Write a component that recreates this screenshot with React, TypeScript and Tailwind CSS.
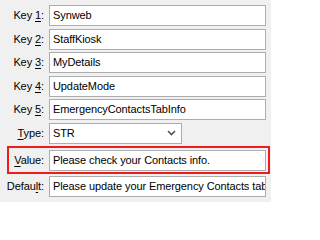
const rows = [
  { pre: "Key ", key: "1", post: ":", value: "Synweb" },
  { pre: "Key ", key: "2", post: ":", value: "StaffKiosk" },
  { pre: "Key ", key: "3", post: ":", value: "MyDetails" },
  { pre: "Key ", key: "4", post: ":", value: "UpdateMode" },
  { pre: "Key ", key: "5", post: ":", value: "EmergencyContactsTabInfo" },
];

function Label({ pre, k, post }: { pre: string; k: string; post: string }) {
  return (
    <span className="whitespace-nowrap">
      {pre}
      <span className="underline underline-offset-[2px]">{k}</span>
      {post}
    </span>
  );
}

function Box({ value }: { value: string }) {
  return (
    <div className="flex h-[21px] min-w-0 flex-1 items-center overflow-hidden whitespace-nowrap border border-[#adadad] bg-white pl-[3px]">
      {value}
    </div>
  );
}

export default function App() {
  return (
    <div
      className="flex h-[202px] w-[271px] flex-col bg-[#f0f0f0] pr-[5px] pt-[5px] text-[11px] tracking-[-0.1px] text-black"
      style={{ fontFamily: '"Liberation Sans", Arial, sans-serif' }}
    >
      {rows.map((r) => (
        <div key={r.key} className="mb-[2.5px] flex items-center">
          <div className="w-[44px] text-right">
            <Label pre={r.pre} k={r.key} post={r.post} />
          </div>
          <div className="ml-[5px] flex flex-1">
            <Box value={r.value} />
          </div>
        </div>
      ))}

      <div className="flex items-center">
        <div className="w-[44px] text-right">
          <Label pre="" k="T" post="ype:" />
        </div>
        <div className="ml-[5px] flex h-[21px] w-[133px] items-center justify-between border border-[#adadad] bg-white pl-[3px] pr-[5px]">
          <span>STR</span>
          <svg width="9" height="6" viewBox="0 0 9 6" className="text-[#555]">
            <path d="M1 1l3.5 3.5L8 1" fill="none" stroke="currentColor" strokeWidth="1.6" />
          </svg>
        </div>
      </div>

      <div className="ml-[7px] mr-[-4px] mt-[2px] flex items-center border-2 border-[#ee1c1c] pb-[1px] pt-[2px]">
        <div className="w-[35px] text-right">
          <Label pre="" k="V" post="alue:" />
        </div>
        <div className="ml-[5px] mr-[2px] flex flex-1">
          <Box value="Please check your Contacts info." />
        </div>
      </div>

      <div className="mt-[2px] flex items-center">
        <div className="w-[44px] text-right">
          <Label pre="Defau" k="l" post="t:" />
        </div>
        <div className="ml-[5px] flex min-w-0 flex-1">
          <Box value="Please update your Emergency Contacts tab" />
        </div>
      </div>
    </div>
  );
}
